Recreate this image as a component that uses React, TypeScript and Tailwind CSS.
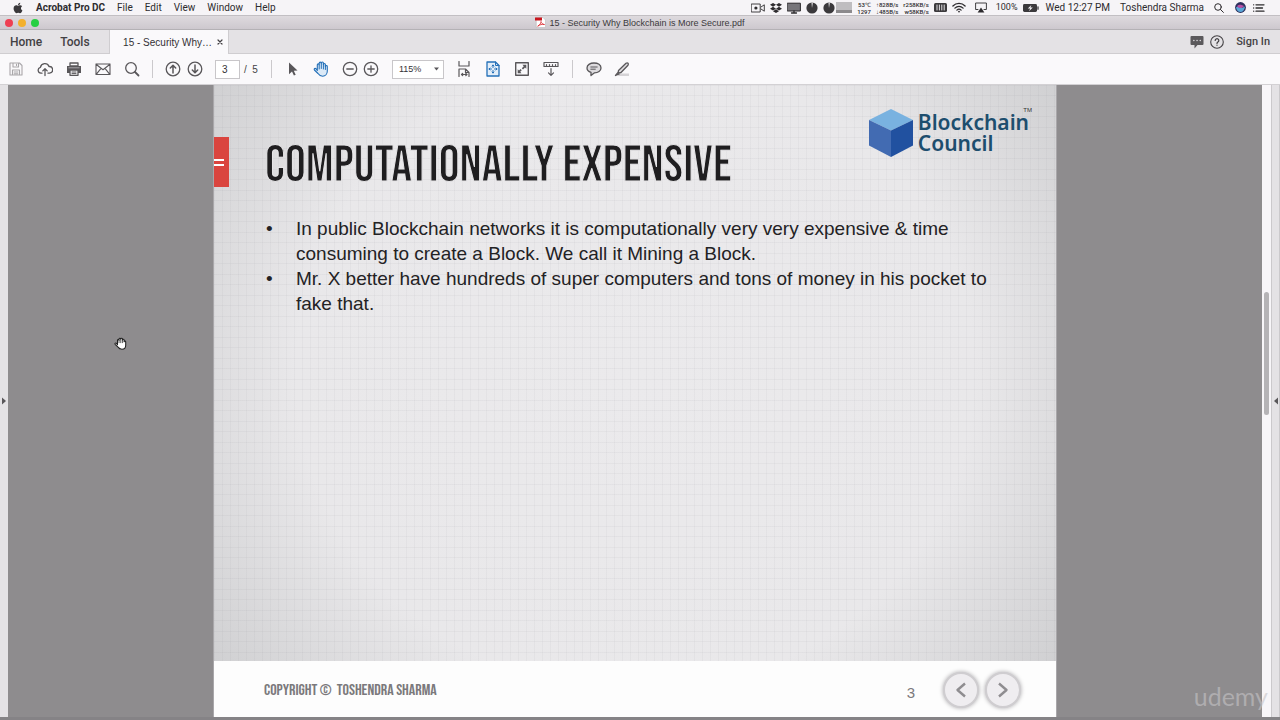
import type { ReactNode } from "react";
import { FaApple, FaDropbox } from "react-icons/fa";

type IconProps = { children: ReactNode; className?: string; box?: string };

function Icon({ children, className = "size-4", box = "0 0 16 16" }: IconProps) {
  return (
    <svg
      viewBox={box}
      className={`shrink-0 ${className}`}
      fill="none"
      stroke="currentColor"
      strokeWidth="1.3"
      strokeLinecap="round"
      strokeLinejoin="round"
      aria-hidden="true"
    >
      {children}
    </svg>
  );
}

function ToolButton({ label, children, className = "" }: { label: string; children: ReactNode; className?: string }) {
  return (
    <button type="button" aria-label={label} className={`size-4 shrink-0 ${className}`}>
      <Icon>{children}</Icon>
    </button>
  );
}

function Separator() {
  return <div className="h-[18px] w-px shrink-0 bg-[#cbc9cc]" />;
}

const menus = ["File", "Edit", "View", "Window", "Help"];

function Pie() {
  return (
    <Icon className="size-3" box="0 0 12 12">
      <circle cx="6" cy="6" r="5.6" fill="#3b393c" stroke="none" />
      <path d="M6 6 5.4.4 7 .4Z" fill="#d8d6d9" stroke="none" />
    </Icon>
  );
}

function Stat({ top, bottom }: { top: string; bottom: string }) {
  return (
    <span className="flex flex-col text-right text-[6px] leading-[7px] font-medium whitespace-nowrap">
      <span>{top}</span>
      <span>{bottom}</span>
    </span>
  );
}

function MenuBar() {
  return (
    <header className="flex h-[15px] shrink-0 items-center justify-between bg-[#f6f4f7] pr-[15px] pl-3 font-['Roboto',sans-serif] text-[10px] text-[#2d2b2e]">
      <nav aria-label="Application menu" className="flex items-center gap-3">
        <FaApple className="size-3 text-[#3a383b]" />
        <button type="button" className="font-bold">Acrobat Pro DC</button>
        {menus.map((m) => (
          <button type="button" key={m}>{m}</button>
        ))}
      </nav>
      <div className="flex items-center gap-[5px]">
        <Icon className="h-[10px] w-[14px]" box="0 0 14 10">
          <path d="M.6 1h8.6v8H.6ZM10 4l3.3-2.2v6.4L10 6" strokeWidth="0.9" />
          <circle cx="4.9" cy="5" r="1.6" fill="currentColor" stroke="none" />
        </Icon>
        <FaDropbox className="size-3" />
        <Icon className="h-3 w-[14px]" box="0 0 14 12">
          <path d="M.6 1.2h12.8v7.8H.6Z" fill="#77757a" strokeWidth="1" />
          <path d="M4.500 11h5M7 9v2" />
        </Icon>
        <Pie />
        <Pie />
        <span className="-ml-1 h-[11px] w-4 border-b-[3px] border-[#8c8a8d] bg-[#bfbdc0]" />
        <Stat top="53℃" bottom="1297" />
        <Stat top="↑828B/s" bottom="↓485B/s" />
        <Stat top="r258KB/s" bottom="w58KB/s" />
        <Icon className="h-[9px] w-[13px]" box="0 0 13 9">
          <rect width="13" height="9" rx="1.5" fill="#3b393c" stroke="none" />
          <path d="M3 2v5M5.400 2v5M7.800 2v5M10.200 2v5" stroke="#f6f4f7" strokeWidth="0.9" />
        </Icon>
        <Icon className="h-[11px] w-[14px]" box="0 0 14 11">
          <path d="M.9 4a8.6 8.6 0 0 1 12.2 0M2.900 6.100a5.800 5.800 0 0 1 8.200 0M4.900 8.100a3 3 0 0 1 4.200 0" />
          <circle cx="7" cy="9.6" r="0.9" fill="currentColor" stroke="none" />
        </Icon>
        <Icon className="mx-1 h-[11px] w-3" box="0 0 12 11">
          <path d="M3 7.500H.6V1h10.800v6.500H9" strokeWidth="0.9" />
          <path d="M6 5.600 9.400 10.400H2.600Z" fill="currentColor" stroke="none" />
        </Icon>
        <span className="text-[9px]">100%</span>
        <Icon className="h-2 w-4" box="0 0 16 8">
          <rect x="0" y="0" width="14" height="8" rx="1.4" fill="#3b393c" stroke="none" />
          <path d="M15 2.800v2.400" strokeWidth="1.2" />
          <path d="M8.400 1 4.800 4.600h2.400L6 7.200l3.800-3.800H7.400Z" fill="#f6f4f7" stroke="none" />
        </Icon>
        <time className="ml-[2px] whitespace-nowrap">Wed 12:27 PM</time>
        <span className="mx-[5px] whitespace-nowrap">Toshendra Sharma</span>
        <button type="button" aria-label="Spotlight" className="mr-[6px]">
          <Icon className="size-[10px]" box="0 0 10 10">
            <circle cx="4" cy="4" r="3.3" strokeWidth="1" />
            <path d="M6.500 6.500 9.400 9.400" strokeWidth="1" />
          </Icon>
        </button>
        <button type="button" aria-label="Siri">
          <Icon className="size-[11px]" box="0 0 11 11">
            <circle cx="5.500" cy="5.500" r="5.400" fill="#2c2f5c" stroke="none" />
            <path d="M1 5.500C3 3 5 8 10 4.500 9.600 8 8 10 5.500 10S1.400 8 1 5.500Z" fill="#5aa7d8" stroke="none" />
            <path d="M2 4.200C4 1.800 7 3 9 4 7 7 4 6.500 2 4.200Z" fill="#b44fa6" stroke="none" />
          </Icon>
        </button>
        <button type="button" aria-label="Notification Center" className="ml-[2px]">
          <Icon className="h-2 w-3" box="0 0 12 8">
            <path d="M3 .8h8M3 4h6.500M3 7.200h8M.6.8h.1M.6 4h.1M.6 7.200h.1" />
          </Icon>
        </button>
      </div>
    </header>
  );
}

function TitleBar() {
  return (
    <div className="relative flex h-[15px] shrink-0 items-center justify-center border-y border-t-[#c2bfc3] border-b-[#b4b1b5] bg-linear-to-b from-[#dedade] to-[#cdc8ce]">
      <div className="absolute left-[5px] flex gap-[5px]">
        <button type="button" aria-label="Close window" className="size-2 rounded-full bg-[#ee3f52]" />
        <button type="button" aria-label="Minimise window" className="size-2 rounded-full bg-[#f3b02c]" />
        <button type="button" aria-label="Zoom window" className="size-2 rounded-full bg-[#26cf41]" />
      </div>
      <h1 className="flex items-center gap-[3px] font-['Liberation_Sans',sans-serif] text-[9px] leading-[14px] text-[#3b393c]">
        <Icon className="size-[11px]" box="0 0 11 11">
          <path d="M1.500.5h6.500l2.500 2.500v7.500h-9Z" fill="#fff" stroke="#bbb" strokeWidth="0.6" />
          <path d="M0 .5h7v3H0Z" fill="#c9151e" stroke="none" />
          <path d="M3 9c2-1 3-3 3-4.500C6 6 8 7.500 9.500 7.500 7 7 4.500 7.800 3 9Z" stroke="#d8232a" strokeWidth="0.8" />
        </Icon>
        15 - Security Why Blockchain is More Secure.pdf
      </h1>
    </div>
  );
}

function TabStrip() {
  return (
    <div className="flex h-6 shrink-0 items-stretch border-b border-[#cfcdd0] bg-[#e4e2e5] text-[#434144]">
      <nav className="flex w-[109px] items-center gap-[18px] pl-[10px] font-['Roboto',sans-serif] text-[12px] font-medium">
        <button type="button">Home</button>
        <button type="button">Tools</button>
      </nav>
      <div className="-mb-px flex w-[120px] items-center justify-end gap-[5px] border-x border-[#cfcdd0] bg-[#faf9fb] pr-[5px]">
        <button type="button" className="font-['Liberation_Sans',sans-serif] text-[10px] text-[#343235]">15 - Security Why…</button>
        <button type="button" aria-label="Close tab">
          <Icon className="size-[6px]" box="0 0 6 6">
            <path d="m1 1 4 4M5 1 1 5" strokeWidth="1.2" />
          </Icon>
        </button>
      </div>
      <div className="ml-auto flex items-center pr-[10px]">
        <button type="button" aria-label="Comments">
          <Icon className="h-[14px] w-[14px]" box="0 0 14 14">
            <path d="M1.500 1h11q1 0 1 1v7q0 1-1 1H7.500L4.500 13.500V10h-3q-1 0-1-1V2q0-1 1-1Z" fill="#5b595c" stroke="none" />
            <path d="M3.800 5.500h.1M7 5.500h.1M10.200 5.500h.1" stroke="#d8d6d9" strokeWidth="1.5" />
          </Icon>
        </button>
        <button type="button" aria-label="Help" className="ml-[6px]">
          <Icon className="size-[14px]" box="0 0 14 14">
            <circle cx="7" cy="7" r="6.300" strokeWidth="1.1" />
            <path d="M5.200 5.500a1.800 1.800 0 1 1 2.700 1.600c-.6.4-.9.6-.9 1.300M7 10.200v.1" strokeWidth="1.2" />
          </Icon>
        </button>
        <a href="#sign-in" className="ml-3 font-['Roboto',sans-serif] text-[11px] leading-[24px] font-medium">Sign In</a>
      </div>
    </div>
  );
}

function Toolbar() {
  return (
    <div className="flex h-[31px] shrink-0 items-center border-b border-[#d3d1d4] bg-[#faf9fb] pl-2 font-['Liberation_Sans',sans-serif] text-[10px] text-[#59575a]">
      <div className="flex gap-[13px]">
        <ToolButton label="Save" className="text-[#a9a7aa]">
          <path d="M2 2h9.500L14 4.500V14H2ZM5 2v4h5.500V2M8.500 3.300v1.200M4.500 14V9h7v5M6.200 11h3.600M6.200 12.700h3.600" strokeWidth="1.1" />
        </ToolButton>
        <ToolButton label="Upload">
          <path d="M5 12.200H4A3 3 0 0 1 3.400 6.300 4.500 4.500 0 0 1 12 5.500a3.300 3.300 0 0 1 .6 6.700H11M8 14.500V8M5.800 9.900 8 7.700l2.200 2.200" />
        </ToolButton>
        <ToolButton label="Print">
          <path d="M4 2h8v3H4Z" />
          <path d="M1 5h14v7H1Z" fill="currentColor" stroke="none" />
          <path d="M4 9h8v5.300H4Z" fill="#faf9fb" />
          <path d="M6 11h4M6 12.600h4" strokeWidth="1" />
          <path d="M2.800 6.800h10.400" stroke="#c9c7ca" strokeWidth="0.7" />
        </ToolButton>
        <ToolButton label="Send by email">
          <path d="M1 3h14v10.500H1ZM1 3.200l7 5.600 7-5.600M1.200 13.300l4.800-6M14.800 13.300l-4.800-6" strokeWidth="1.1" />
        </ToolButton>
        <ToolButton label="Find">
          <circle cx="7" cy="7" r="5.300" />
          <path d="m11 11 3.500 3.500" strokeWidth="1.8" />
        </ToolButton>
      </div>
      <div className="ml-3 flex items-center">
        <Separator />
        <ToolButton label="Previous page" className="ml-3">
          <circle cx="8" cy="8" r="6.800" />
          <path d="M8 12V4.500M5.300 7 8 4.300 10.700 7" strokeWidth="1.5" />
        </ToolButton>
        <ToolButton label="Next page" className="ml-[6px]">
          <circle cx="8" cy="8" r="6.800" />
          <path d="M8 4v7.500M5.300 9 8 11.700 10.700 9" strokeWidth="1.5" />
        </ToolButton>
        <label className="ml-3 flex items-center gap-1">
          <input
            aria-label="Page number"
            defaultValue="3"
            className="h-[19px] w-[25px] border border-[#c8c6c9] bg-white pl-[6px] text-[#343235]"
          />
          <span className="w-[27px] whitespace-pre text-[#444245]">/  5</span>
        </label>
      </div>
      <div className="flex items-center">
        <Separator />
        <ToolButton label="Select" className="ml-[13px]">
          <path d="M4 1.500v11.800l3-2.700 1.900 4 1.800-.8-1.900-4 3.700-.2Z" fill="currentColor" stroke="none" />
        </ToolButton>
        <ToolButton label="Hand" className="ml-3 text-[#2470b8]">
          <path
            d="M4.300 9.500V3.800c0-1.300 1.900-1.300 1.900 0V2.200c0-1.400 2.100-1.400 2.100 0v-.1c0-1.400 2.100-1.400 2.100 0v1.300c0-1.300 2-1.300 2 0v2c0-1.200 1.900-1.200 1.900 0V10c0 3-2 5.200-4.600 5.200-2.600 0-3.700-1.200-4.700-2.700L1.400 9c-.8-1.300.8-2.100 1.700-1.100Z"
            fill="#dceaf7"
            strokeWidth="1.1"
          />
          <path d="M6.200 4v4M8.300 2.500V7.500M10.400 3v5M12.400 4.500v4" strokeWidth="1" />
        </ToolButton>
        <ToolButton label="Zoom out" className="ml-[13px]">
          <circle cx="8" cy="8" r="6.700" />
          <path d="M4.800 8h6.400" />
        </ToolButton>
        <ToolButton label="Zoom in" className="ml-[5px]">
          <circle cx="8" cy="8" r="6.700" />
          <path d="M4.800 8h6.400M8 4.800v6.400" />
        </ToolButton>
        <div className="relative ml-[13px] flex items-center">
          <select
            aria-label="Zoom level"
            defaultValue="115%"
            className="h-[19px] w-[52px] appearance-none border border-[#c8c6c9] bg-white pt-px pl-[6px] text-[9px] text-[#343235]"
          >
            <option>100%</option>
            <option>115%</option>
            <option>125%</option>
          </select>
          <Icon className="pointer-events-none absolute right-[5px] h-1 w-[5px]" box="0 0 5 4">
            <path d="M0 .5h5L2.500 3.500Z" fill="currentColor" stroke="none" />
          </Icon>
        </div>
      </div>
      <div className="ml-3 flex items-center gap-[13px]">
        <ToolButton label="Fit width">
          <path d="M3 .5V5h10V.5M3 15.500V8h6.500L13 11.500v4M9.500 8v3.500H13M5.500 13.500h5M6.700 12.300 5.500 13.500l1.200 1.200M9.800 12.300l1.200 1.200-1.200 1.200" strokeWidth="1.2" />
        </ToolButton>
        <ToolButton label="Fit page" className="text-[#2470b8]">
          <path d="M2 1h8.500L14 4.500V15H2Z" fill="#e3eef9" />
          <path d="M10.500 1v3.500H14M8 4v2.500M7 5l1-1 1 1M8 9.500V12M7 11l1 1 1-1M4 8h2.500M5 7 4 8l1 1M9.500 8H12M11 7l1 1-1 1" strokeWidth="1" />
        </ToolButton>
        <ToolButton label="Full screen">
          <path d="M1.700 1.700h12.600v12.600H1.700Z" strokeWidth="1.4" />
          <path d="M12.300 3.700v4L11 6.400 9 8.400 7.800 7.200l2-2L8.400 3.700ZM3.700 12.300v-4L5 9.600l1.600-1.600 1.200 1.200-1.600 1.600 1.300 1.500Z" fill="currentColor" stroke="none" />
        </ToolButton>
        <ToolButton label="Read mode">
          <path d="M1 1.500h14v4H1ZM3.500 3.500v1.800M6.500 3.500v1.800M9.500 3.500v1.800M12.500 3.500v1.800M8 7.500V14M5.500 11.800 8 14.300l2.500-2.500" strokeWidth="1.2" />
        </ToolButton>
        <Separator />
        <ToolButton label="Add comment">
          <path d="M8 2c4 0 7 2 7 4.900s-3 4.900-6.500 4.900L5 14.500v-3.200C2.500 10.500 1 9 1 6.900 1 4 4 2 8 2Z" fill="#dddbde" />
          <path d="M4.800 6h6.400M4.800 8.200h4.500" strokeWidth="1" />
        </ToolButton>
        <ToolButton label="Highlight" className="-ml-px">
          <path d="M6 12.500h9v2.500H3.500Z" fill="#d5d3d6" stroke="none" />
          <path d="M4.500 9.500 12 2.200q1.300-.8 2 0t0 2L7 11.500l-3 .6ZM4 11.500l-2.500 3 3.700-1.500" fill="#dddbde" />
        </ToolButton>
      </div>
    </div>
  );
}

function Logo() {
  return (
    <div className="relative flex items-center gap-[5px] pr-[3px]">
      <svg viewBox="0 0 44 48" className="h-12 w-11" aria-hidden="true">
        <path d="M22 0 44 11 22 21.500 0 11Z" fill="#79b2e0" />
        <path d="M0 11 22 21.500V48L0 36.500Z" fill="#426bb2" />
        <path d="M44 11 22 21.500V48L44 36.500Z" fill="#2151a0" />
      </svg>
      <p className="font-['Noto_Sans',sans-serif] text-[21px] leading-[21px] font-semibold text-[#1d4e6e]">
        Blockchain
        <br />
        Council
      </p>
      <span className="absolute -top-[2px] right-0 font-['Liberation_Sans',sans-serif] text-[6px] leading-[7px] text-[#333]">TM</span>
    </div>
  );
}

const points = [
  "In public Blockchain networks it is computationally very very expensive & time consuming to create a Block. We call it Mining a Block.",
  "Mr. X better have hundreds of super computers and tons of money in his pocket to fake that.",
];

function Slide() {
  return (
    <article className="flex w-full max-w-[844px] flex-col border-x border-[#a9a7aa]">
      <div className="flex-1 bg-[repeating-linear-gradient(90deg,rgba(110,110,120,0.05)_0_1px,transparent_1px_8px),repeating-linear-gradient(180deg,rgba(110,110,120,0.06)_0_1px,transparent_1px_10px,rgba(110,110,120,0.06)_10px_11px,transparent_11px_21px),radial-gradient(ellipse_62%_85%_at_50%_50%,#ebeaec_0%,#e9e8ea_65%,#d0d0d2_100%)]">
        <div className="flex items-start justify-between pt-6 pr-6">
          <div className="mt-7 flex items-start">
            <div className="flex h-[50px] w-[15px] flex-col justify-center gap-[3px] bg-[#da453f]">
              <span className="h-[2px] w-[10px] bg-white" />
              <span className="h-[2px] w-[10px] bg-white" />
            </div>
            <h2 className="ml-9 pt-1 font-['Bebas_Neue','Liberation_Sans_Narrow',sans-serif] text-[52px] leading-[50px] font-normal whitespace-nowrap text-[#1f1e20] [-webkit-text-stroke:1px_#e6e5e7]">
              COMPUTATIONALLY EXPENSIVE
            </h2>
          </div>
          <Logo />
        </div>
        <ul className="mt-[25px] mr-[60px] ml-[50px] font-['Liberation_Sans',sans-serif] text-[19px] leading-[25px] text-[#232224]">
          {points.map((p) => (
            <li key={p} className="flex">
              <span className="w-8 shrink-0 pl-[2px]">•</span>
              <span>{p}</span>
            </li>
          ))}
        </ul>
      </div>
      <footer className="flex h-14 items-center bg-[#fdfdfd] pt-[2px] pr-[35px] pl-[50px] text-[#7b797c]">
        <p className="pt-[2px] font-['Bebas_Neue','Liberation_Sans_Narrow',sans-serif] text-[16px] whitespace-pre">
          COPYRIGHT ©  TOSHENDRA SHARMA
        </p>
        <span className="mt-[6px] mr-7 ml-auto font-['Liberation_Sans',sans-serif] text-[15px]">3</span>
        <div className="flex gap-[6px]">
          <button type="button" aria-label="Previous slide" className="flex size-9 items-center justify-center rounded-full border-2 border-[#cfcdd0] bg-[#efedf0] text-[#8f8d90] shadow-[0_0_4px_#a9a7aa]">
            <Icon className="h-4 w-3" box="0 0 12 16"><path d="M10 1.500 2.500 8 10 14.500" strokeWidth="2.4" strokeLinecap="butt" /></Icon>
          </button>
          <button type="button" aria-label="Next slide" className="flex size-9 items-center justify-center rounded-full border-2 border-[#cfcdd0] bg-[#efedf0] text-[#8f8d90] shadow-[0_0_4px_#a9a7aa]">
            <Icon className="h-4 w-3" box="0 0 12 16"><path d="M2 1.500 9.500 8 2 14.500" strokeWidth="2.4" strokeLinecap="butt" /></Icon>
          </button>
        </div>
      </footer>
    </article>
  );
}

export default function App() {
  return (
    <div className="relative flex h-screen flex-col overflow-hidden bg-[#e4e2e5]">
      <MenuBar />
      <TitleBar />
      <TabStrip />
      <Toolbar />
      <div className="flex min-h-0 flex-1 border-b-[3px] border-[#858386]">
        <button type="button" aria-label="Show navigation pane" className="flex w-2 shrink-0 items-center justify-center text-[#59575a]">
          <Icon className="h-2 w-1" box="0 0 4 8"><path d="M0 .5 4 4 0 7.500Z" fill="currentColor" stroke="none" /></Icon>
        </button>
        <main className="flex flex-1 justify-center bg-[#8e8c8e]">
          <Slide />
        </main>
        <div className="w-[9px] shrink-0 bg-[#f8f6f9] px-[2px] pt-[207px]">
          <div className="h-[123px] rounded-full bg-[#b5b3b6]" />
        </div>
        <button type="button" aria-label="Show tools pane" className="flex w-[9px] shrink-0 items-center justify-center border-x border-[#cbc9cc] text-[#59575a]">
          <Icon className="h-2 w-1" box="0 0 4 8"><path d="M4 .5 0 4l4 3.500Z" fill="currentColor" stroke="none" /></Icon>
        </button>
      </div>
      <Icon className="pointer-events-none absolute top-[337px] left-[114px] size-[13px]" box="0 0 16 16">
        <path
          d="M4.300 8V4c0-1.300 1.900-1.300 1.900 0V2.600c0-1.400 2.100-1.400 2.100 0v-.1c0-1.400 2.100-1.400 2.100 0v1.300c0-1.300 2-1.300 2 0v2c0-1.200 2-1.200 2 0V10c0 3-2 5-4.700 5-2.600 0-3.700-1-4.700-2.500L1.400 9c-.8-1.300.8-2.100 1.700-1.100L4.300 9.500Z"
          fill="#fff"
          stroke="#222"
          strokeWidth="1.3"
        />
        <path d="M6.200 4v3M8.300 3v4M10.400 4v3" stroke="#222" strokeWidth="0.9" />
      </Icon>
      <span className="pointer-events-none absolute right-3 bottom-2 font-['Lato',sans-serif] text-[25px] leading-8 text-[#c6c4c7]/60">udemy</span>
    </div>
  );
}
